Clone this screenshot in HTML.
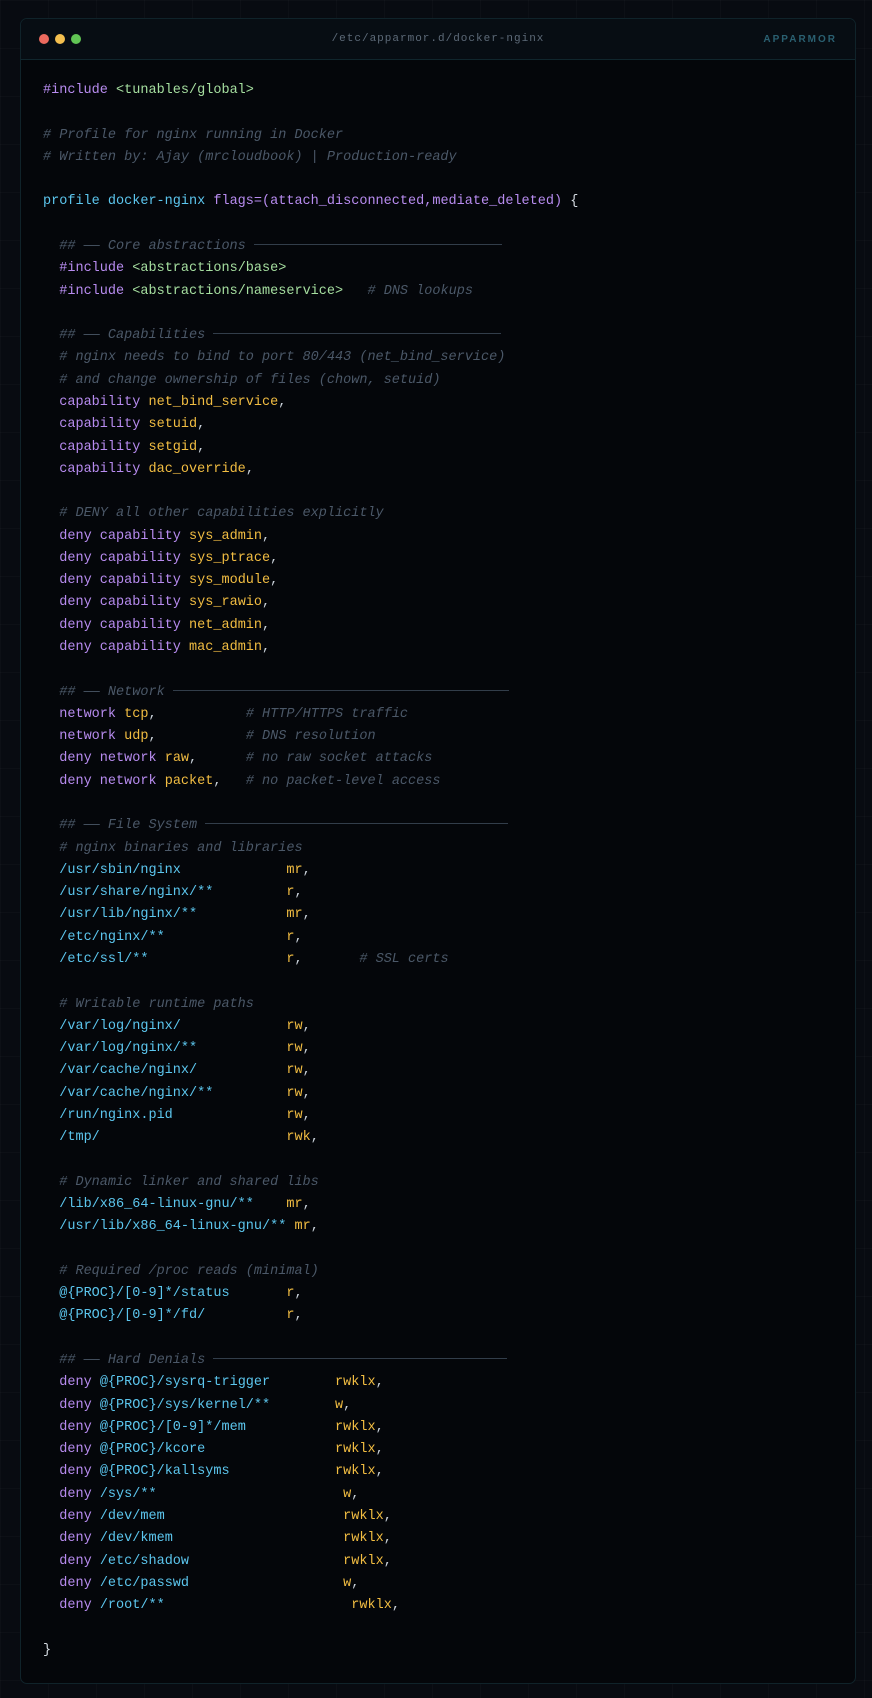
<!DOCTYPE html>
<html><head><meta charset="utf-8"><style>
html,body{margin:0;padding:0}
body{width:872px;height:1698px;background-color:#080b11;background-image:linear-gradient(rgba(255,255,255,0.018) 1px,transparent 1px),linear-gradient(90deg,rgba(255,255,255,0.018) 1px,transparent 1px);background-size:48px 48px;position:relative;overflow:hidden;font-family:"Liberation Mono",monospace}
.card{position:absolute;left:20px;top:18px;width:834px;height:1664px;background:#04060a;border:1px solid #10232a;border-radius:7px;overflow:hidden}
.hdr{position:absolute;left:0;top:0;right:0;height:40px;background:#070d13;border-bottom:1px solid #10262d}
.dot{position:absolute;top:15px;width:10px;height:10px;border-radius:50%}
.title{position:absolute;left:0;right:0;top:14px;text-align:center;color:#5d6a78;font-size:11px;letter-spacing:1px}
.tag{position:absolute;right:18px;top:15px;color:#2a6071;font-size:10px;font-weight:bold;letter-spacing:2px;font-family:"Liberation Sans",sans-serif}
pre{position:absolute;left:22px;top:61px;margin:0;font-family:"Liberation Mono",monospace;font-size:13.53px;line-height:22.28px;color:#c9d1da;white-space:pre}
.k{color:#b88cf0}.g{color:#a6dfa0}.c{color:#4b5868;font-style:italic}.p{color:#5cc6ee}.o{color:#f2bd42}.w{color:#d5dbe2}
.r{display:inline-block;vertical-align:middle;border-top:1px solid #323d4a;height:0;margin-top:-2px}
</style></head><body>
<div class="card">
<div class="hdr">
<div class="dot" style="left:18px;background:#ec6a5e"></div>
<div class="dot" style="left:34px;background:#f4bf4f"></div>
<div class="dot" style="left:50px;background:#61c554"></div>
<div class="title">/etc/apparmor.d/docker-nginx</div>
<div class="tag">APPARMOR</div>
</div>
<pre><span class="k">#include</span> <span class="g">&lt;tunables/global&gt;</span>

<span class="c"># Profile for nginx running in Docker</span>
<span class="c"># Written by: Ajay (mrcloudbook) | Production-ready</span>

<span class="p">profile docker-nginx</span> <span class="k">flags=(attach_disconnected,mediate_deleted)</span> <span class="w">{</span>

  <span class="c">## —— Core abstractions </span><span class="r" style="width:248px"></span>
  <span class="k">#include</span> <span class="g">&lt;abstractions/base&gt;</span>
  <span class="k">#include</span> <span class="g">&lt;abstractions/nameservice&gt;</span>   <span class="c"># DNS lookups</span>

  <span class="c">## —— Capabilities </span><span class="r" style="width:288px"></span>
  <span class="c"># nginx needs to bind to port 80/443 (net_bind_service)</span>
  <span class="c"># and change ownership of files (chown, setuid)</span>
  <span class="k">capability</span> <span class="o">net_bind_service</span>,
  <span class="k">capability</span> <span class="o">setuid</span>,
  <span class="k">capability</span> <span class="o">setgid</span>,
  <span class="k">capability</span> <span class="o">dac_override</span>,

  <span class="c"># DENY all other capabilities explicitly</span>
  <span class="k">deny capability</span> <span class="o">sys_admin</span>,
  <span class="k">deny capability</span> <span class="o">sys_ptrace</span>,
  <span class="k">deny capability</span> <span class="o">sys_module</span>,
  <span class="k">deny capability</span> <span class="o">sys_rawio</span>,
  <span class="k">deny capability</span> <span class="o">net_admin</span>,
  <span class="k">deny capability</span> <span class="o">mac_admin</span>,

  <span class="c">## —— Network </span><span class="r" style="width:336px"></span>
  <span class="k">network</span> <span class="o">tcp</span>,           <span class="c"># HTTP/HTTPS traffic</span>
  <span class="k">network</span> <span class="o">udp</span>,           <span class="c"># DNS resolution</span>
  <span class="k">deny network</span> <span class="o">raw</span>,      <span class="c"># no raw socket attacks</span>
  <span class="k">deny network</span> <span class="o">packet</span>,   <span class="c"># no packet-level access</span>

  <span class="c">## —— File System </span><span class="r" style="width:303px"></span>
  <span class="c"># nginx binaries and libraries</span>
  <span class="p">/usr/sbin/nginx</span>             <span class="o">mr</span>,
  <span class="p">/usr/share/nginx/**</span>         <span class="o">r</span>,
  <span class="p">/usr/lib/nginx/**</span>           <span class="o">mr</span>,
  <span class="p">/etc/nginx/**</span>               <span class="o">r</span>,
  <span class="p">/etc/ssl/**</span>                 <span class="o">r</span>,       <span class="c"># SSL certs</span>

  <span class="c"># Writable runtime paths</span>
  <span class="p">/var/log/nginx/</span>             <span class="o">rw</span>,
  <span class="p">/var/log/nginx/**</span>           <span class="o">rw</span>,
  <span class="p">/var/cache/nginx/</span>           <span class="o">rw</span>,
  <span class="p">/var/cache/nginx/**</span>         <span class="o">rw</span>,
  <span class="p">/run/nginx.pid</span>              <span class="o">rw</span>,
  <span class="p">/tmp/</span>                       <span class="o">rwk</span>,

  <span class="c"># Dynamic linker and shared libs</span>
  <span class="p">/lib/x86_64-linux-gnu/**</span>    <span class="o">mr</span>,
  <span class="p">/usr/lib/x86_64-linux-gnu/**</span> <span class="o">mr</span>,

  <span class="c"># Required /proc reads (minimal)</span>
  <span class="p">@{PROC}/[0-9]*/status</span>       <span class="o">r</span>,
  <span class="p">@{PROC}/[0-9]*/fd/</span>          <span class="o">r</span>,

  <span class="c">## —— Hard Denials </span><span class="r" style="width:294px"></span>
  <span class="k">deny</span> <span class="p">@{PROC}/sysrq-trigger</span>        <span class="o">rwklx</span>,
  <span class="k">deny</span> <span class="p">@{PROC}/sys/kernel/**</span>        <span class="o">w</span>,
  <span class="k">deny</span> <span class="p">@{PROC}/[0-9]*/mem</span>           <span class="o">rwklx</span>,
  <span class="k">deny</span> <span class="p">@{PROC}/kcore</span>                <span class="o">rwklx</span>,
  <span class="k">deny</span> <span class="p">@{PROC}/kallsyms</span>             <span class="o">rwklx</span>,
  <span class="k">deny</span> <span class="p">/sys/**</span>                       <span class="o">w</span>,
  <span class="k">deny</span> <span class="p">/dev/mem</span>                      <span class="o">rwklx</span>,
  <span class="k">deny</span> <span class="p">/dev/kmem</span>                     <span class="o">rwklx</span>,
  <span class="k">deny</span> <span class="p">/etc/shadow</span>                   <span class="o">rwklx</span>,
  <span class="k">deny</span> <span class="p">/etc/passwd</span>                   <span class="o">w</span>,
  <span class="k">deny</span> <span class="p">/root/**</span>                       <span class="o">rwklx</span>,

<span class="w">}</span></pre>
</div>
</body></html>
